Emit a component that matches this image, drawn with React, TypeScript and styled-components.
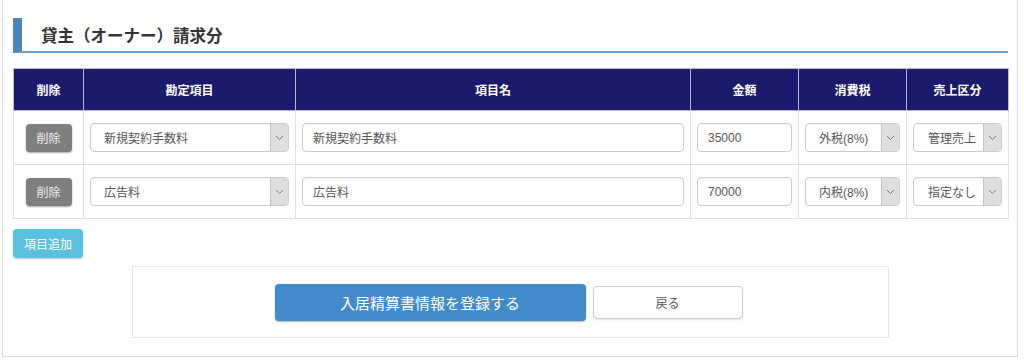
import { createGlobalStyle } from "styled-components";
import styled from "styled-components";

type Line = {
  account: string;
  name: string;
  amount: string;
  tax: string;
  sales: string;
};

const lines: Line[] = [
  { account: "新規契約手数料", name: "新規契約手数料", amount: "35000", tax: "外税(8%)", sales: "管理売上" },
  { account: "広告料", name: "広告料", amount: "70000", tax: "内税(8%)", sales: "指定なし" },
];

const GlobalStyle = createGlobalStyle`
  body {
    margin: 0;
    background: #fff;
    font-family: "Liberation Sans", "Noto Sans CJK JP", sans-serif;
    color: #555;
  }
`;

const Panel = styled.section`
  margin-left: 2px;
  width: 1016px;
  height: 357px;
  box-sizing: border-box;
  border: 1px solid #dcdcdc;
  border-top: none;
  padding: 18px 9px 0 10px;
`;

const Title = styled.h2`
  margin: 0;
  height: 33px;
  display: flex;
  align-items: center;
  padding-left: 19px;
  border-left: 9px solid #4a85ba;
  border-bottom: 2px solid #6d9ccb;
  font-size: 16.5px;
  font-weight: bold;
  color: #333;
  font-family: "Noto Sans CJK JP", sans-serif;
`;

const Table = styled.table`
  margin-top: 15px;
  width: 995px;
  border-collapse: collapse;
  table-layout: fixed;
`;

const HeadCell = styled.th<{ $w: number }>`
  width: ${p => p.$w}px;
  height: 42px;
  box-sizing: border-box;
  background: #1b1a6d;
  color: #fff;
  font-size: 12px;
  font-weight: bold;
  font-family: "Noto Sans CJK JP", sans-serif;
  border: 1px solid #b9b9cf;
  padding: 0;
`;

const Cell = styled.td`
  height: 54px;
  box-sizing: border-box;
  border: 1px solid #e0e0e0;
  padding: 0 6px;
  vertical-align: middle;
  text-align: center;
`;

const GrayButton = styled.button`
  width: 46px;
  height: 28px;
  border: none;
  border-radius: 4px;
  background: #7f7f7f;
  color: #efefef;
  font-size: 12px;
  font-family: "Noto Sans CJK JP", sans-serif;
  box-shadow: 0 1px 2px rgba(0, 0, 0, 0.35);
  padding: 0;
`;

const SelectBox = styled.div`
  display: flex;
  height: 29px;
  box-sizing: border-box;
  border: 1px solid #ccc;
  border-radius: 4px;
  overflow: hidden;
  background: #fff;
  box-shadow: inset 0 1px 1px rgba(0, 0, 0, 0.05);
`;

const SelectText = styled.div<{ $pad: number }>`
  flex: 1;
  display: flex;
  align-items: center;
  padding-left: ${p => p.$pad}px;
  font-size: 12px;
  color: #555;
  white-space: nowrap;
  overflow: hidden;
`;

const Arrow = styled.span`
  width: 17px;
  flex: none;
  display: flex;
  align-items: center;
  justify-content: center;
  background: #dedede;
  border-left: 1px solid #c4c4c4;
`;

const TextInput = styled.input`
  display: block;
  width: 100%;
  height: 29px;
  box-sizing: border-box;
  border: 1px solid #ccc;
  border-radius: 4px;
  padding: 0 0 0 10px;
  font-size: 12px;
  font-family: "Liberation Sans", "Noto Sans CJK JP", sans-serif;
  color: #555;
  box-shadow: inset 0 1px 1px rgba(0, 0, 0, 0.05);
`;

const AddButton = styled.button`
  display: block;
  margin-top: 10px;
  width: 70px;
  height: 29px;
  border: none;
  border-radius: 4px;
  background: #5bc0de;
  color: #fff;
  font-size: 12px;
  font-family: "Noto Sans CJK JP", sans-serif;
  box-shadow: 0 1px 2px rgba(0, 0, 0, 0.25);
  padding: 0;
`;

const Actions = styled.div`
  margin: 8px auto 0;
  width: 757px;
  height: 72px;
  box-sizing: border-box;
  border: 1px solid #e6e6e6;
  display: flex;
  align-items: center;
  justify-content: center;
  gap: 7px;
  padding-right: 4px;
`;

const PrimaryButton = styled.button`
  width: 311px;
  height: 37px;
  border: none;
  border-radius: 4px;
  background: #428bca;
  color: #fff;
  font-size: 15px;
  font-family: "Noto Sans CJK JP", sans-serif;
  box-shadow: 0 1px 2px rgba(0, 0, 0, 0.3);
`;

const BackButton = styled.button`
  width: 150px;
  height: 33px;
  border: 1px solid #ccc;
  border-radius: 4px;
  background: #fff;
  color: #555;
  font-size: 12px;
  font-family: "Noto Sans CJK JP", sans-serif;
  box-shadow: 0 1px 2px rgba(0, 0, 0, 0.1);
`;

const Chevron = () => (
  <svg width="9" height="6" viewBox="0 0 9 6">
    <polyline points="1,1 4.5,4.5 8,1" fill="none" stroke="#777" strokeWidth="1" />
  </svg>
);

const FakeSelect = ({ value, pad }: { value: string; pad: number }) => (
  <SelectBox>
    <SelectText $pad={pad}>{value}</SelectText>
    <Arrow>
      <Chevron />
    </Arrow>
  </SelectBox>
);

const headers: [string, number][] = [
  ["削除", 70],
  ["勘定項目", 212],
  ["項目名", 395],
  ["金額", 108],
  ["消費税", 108],
  ["売上区分", 102],
];

export default function App() {
  return (
    <>
      <GlobalStyle />
      <Panel>
        <Title>貸主（オーナー）請求分</Title>
        <Table>
          <thead>
            <tr>
              {headers.map(([label, w]) => (
                <HeadCell key={label} $w={w}>
                  {label}
                </HeadCell>
              ))}
            </tr>
          </thead>
          <tbody>
            {lines.map(line => (
              <tr key={line.name}>
                <Cell>
                  <GrayButton>削除</GrayButton>
                </Cell>
                <Cell>
                  <FakeSelect value={line.account} pad={13} />
                </Cell>
                <Cell>
                  <TextInput defaultValue={line.name} />
                </Cell>
                <Cell>
                  <TextInput defaultValue={line.amount} />
                </Cell>
                <Cell>
                  <FakeSelect value={line.tax} pad={13} />
                </Cell>
                <Cell>
                  <FakeSelect value={line.sales} pad={14} />
                </Cell>
              </tr>
            ))}
          </tbody>
        </Table>
        <AddButton>項目追加</AddButton>
        <Actions>
          <PrimaryButton>入居精算書情報を登録する</PrimaryButton>
          <BackButton>戻る</BackButton>
        </Actions>
      </Panel>
    </>
  );
}
